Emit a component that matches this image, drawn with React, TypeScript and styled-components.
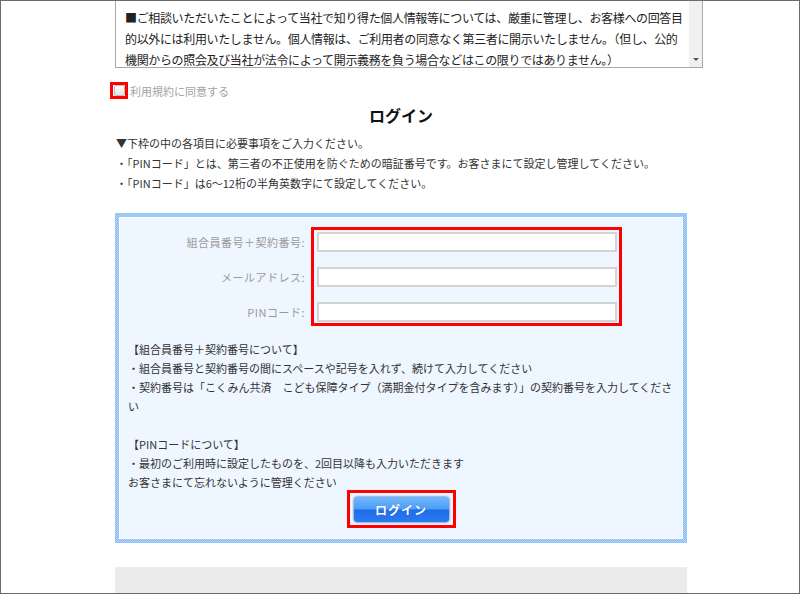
import * as React from 'react';
import styled, { createGlobalStyle } from 'styled-components';

const GlobalStyle = createGlobalStyle`
  html, body {
    margin: 0;
    padding: 0;
    background: #fff;
  }
  body {
    font-family: "Noto Sans CJK JP", "Noto Sans", sans-serif;
    color: #333;
  }
`;

const Frame = styled.div`
  box-sizing: border-box;
  width: 800px;
  height: 594px;
  border: 1px solid #6b6b6b;
  overflow: hidden;
`;

const Column = styled.div`
  width: 572px;
  margin-left: 114px;
`;

const TermsBox = styled.div`
  display: flex;
  box-sizing: border-box;
  width: 588px;
  height: 67px;
  border: 1px solid #a8a8a8;
  border-top: none;
`;

const TermsText = styled.div`
  flex: 1;
  padding: 6px 0 0 9px;
  font-size: 12px;
  letter-spacing: -0.35px;
  line-height: 21px;
  color: #222;
  white-space: nowrap;
`;

const ScrollTrack = styled.div`
  width: 13px;
  background: #f0f0f0;
  display: flex;
  align-items: flex-end;
  justify-content: center;
  padding-bottom: 6px;
`;

const ScrollArrow = styled.span`
  width: 0;
  height: 0;
  border-left: 3px solid transparent;
  border-right: 3px solid transparent;
  border-top: 3px solid #555;
`;

const RedMark = styled.span`
  display: inline-flex;
  box-sizing: border-box;
  border: 3px solid #f00;
`;

const AgreeRow = styled.label`
  display: flex;
  align-items: center;
  gap: 2px;
  margin: 14px 0 0 -5px;
  font-size: 11px;
  color: #a3a3a3;
`;

const CheckMark = styled(RedMark)`
  width: 18px;
  height: 17px;
  align-items: center;
  justify-content: center;
`;

const CheckBox = styled.span`
  width: 9px;
  height: 9px;
  border: 1px solid #bcbcbc;
  border-radius: 2px;
  background: linear-gradient(#ffffff, #e4e4e4);
`;

const Title = styled.h1`
  margin: 6px 0 0;
  font-size: 16px;
  line-height: 20px;
  font-weight: bold;
  text-align: center;
  color: #111;
`;

const Guide = styled.div`
  margin-top: 8px;
  padding-left: 1px;
  font-size: 11px;
  line-height: 20px;
  color: #333;
`;

const FormFrame = styled.div`
  margin-top: 20px;
  padding: 4px;
  background: repeating-conic-gradient(#86bbf8 0% 25%, #b3d5fc 0% 50%) 0 0 / 2px 2px;
`;

const FormPanel = styled.div`
  background: #eef6ff;
  box-shadow: inset 0 0 0 1px #fff;
  padding: 10px 0 11px;
`;

const Fields = styled.div`
  display: flex;
  gap: 6px;
`;

const Labels = styled.div`
  width: 186px;
  padding-top: 5px;
  display: flex;
  flex-direction: column;
  gap: 15px;
`;

const Label = styled.span`
  height: 20px;
  line-height: 20px;
  text-align: right;
  font-size: 11px;
  letter-spacing: 0.5px;
  color: #9a9a9a;
`;

const InputMark = styled(RedMark)`
  flex-direction: column;
  gap: 15px;
  padding: 2px 2px 1px 3px;
`;

const Input = styled.input`
  box-sizing: border-box;
  width: 300px;
  height: 20px;
  margin: 0;
  border: 2px solid #d3d3d3;
  background: #fff;
  outline: none;
`;

const Notes = styled.div`
  margin-top: 14px;
  padding-left: 9px;
  font-size: 11px;
  line-height: 19px;
  color: #333;
`;

const ButtonRow = styled.div`
  display: flex;
  justify-content: center;
  margin-top: -2px;
`;

const ButtonMark = styled(RedMark)`
  padding: 3px 3px 2px;
`;

const LoginButton = styled.button`
  box-sizing: border-box;
  width: 97px;
  height: 27px;
  border: 1px solid #9fbde4;
  border-radius: 4px;
  box-shadow: 0 0 0 1px #dbe5f1;
  background: linear-gradient(#74b8fb 0%, #4d9ef5 48%, #1f6ce8 52%, #2a7af0 100%);
  color: #fff;
  font: bold 12px "Noto Sans CJK JP", sans-serif;
  letter-spacing: 1px;
  text-shadow: 0 0 1px rgba(0, 40, 120, 0.4);
  cursor: pointer;
`;

const Footer = styled.div`
  margin-top: 24px;
  height: 40px;
  background: #ebebeb;
`;

const terms = [
  '■ご相談いただいたことによって当社で知り得た個人情報等については、厳重に管理し、お客様への回答目',
  '的以外には利用いたしません。個人情報は、ご利用者の同意なく第三者に開示いたしません。（但し、公的',
  '機関からの照会及び当社が法令によって開示義務を負う場合などはこの限りではありません。）',
];

const guide = [
  '▼下枠の中の各項目に必要事項をご入力ください。',
  '・「PINコード」とは、第三者の不正使用を防ぐための暗証番号です。お客さまにて設定し管理してください。',
  '・「PINコード」は6～12桁の半角英数字にて設定してください。',
];

const fields = ['組合員番号＋契約番号:', 'メールアドレス:', 'PINコード:'];

const notes = [
  '【組合員番号＋契約番号について】',
  '・組合員番号と契約番号の間にスペースや記号を入れず、続けて入力してください',
  '・契約番号は「こくみん共済　こども保障タイプ（満期金付タイプを含みます）」の契約番号を入力してくださ',
  'い',
  '\u00a0',
  '【PINコードについて】',
  '・最初のご利用時に設定したものを、2回目以降も入力いただきます',
  'お客さまにて忘れないように管理ください',
];

const App: React.FC = () => (
  <Frame>
    <GlobalStyle />
    <Column>
      <TermsBox>
        <TermsText>
          {terms.map((line, i) => <div key={i}>{line}</div>)}
        </TermsText>
        <ScrollTrack>
          <ScrollArrow />
        </ScrollTrack>
      </TermsBox>

      <AgreeRow>
        <CheckMark><CheckBox /></CheckMark>
        利用規約に同意する
      </AgreeRow>

      <Title>ログイン</Title>

      <Guide>
        {guide.map((line, i) => <div key={i}>{line}</div>)}
      </Guide>

      <FormFrame>
        <FormPanel>
          <Fields>
            <Labels>
              {fields.map((f) => <Label key={f}>{f}</Label>)}
            </Labels>
            <InputMark>
              <Input type="text" />
              <Input type="text" />
              <Input type="password" />
            </InputMark>
          </Fields>

          <Notes>
            {notes.map((line, i) => <div key={i}>{line}</div>)}
          </Notes>

          <ButtonRow>
            <ButtonMark>
              <LoginButton>ログイン</LoginButton>
            </ButtonMark>
          </ButtonRow>
        </FormPanel>
      </FormFrame>

      <Footer />
    </Column>
  </Frame>
);

export default App;
